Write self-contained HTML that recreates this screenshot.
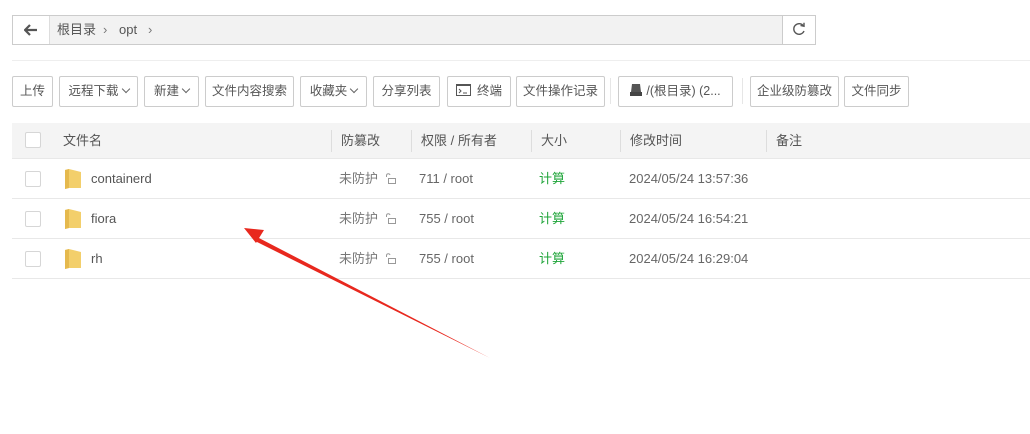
<!DOCTYPE html><html><head><meta charset="utf-8"><style>
*{box-sizing:border-box;margin:0;padding:0}
body{width:1030px;height:434px;background:#fff;font-family:"Liberation Sans","Noto Sans CJK SC",sans-serif;font-size:13px;color:#555;position:relative;overflow:hidden}
.a{position:absolute}
.path{left:12px;top:15px;width:804px;height:30px;border:1px solid #ccc;background:#f2f2f2}
.btn{position:absolute;top:76px;height:31px;border:1px solid #ccc;border-radius:2px;background:#fff;font-size:12.5px;color:#555;line-height:29px;text-align:center;white-space:nowrap}
.chev{display:inline-block;width:6px;height:6px;border-right:1px solid #666;border-bottom:1px solid #666;transform:rotate(45deg);margin-left:4px;position:relative;top:-3px}
.vs{position:absolute;top:78px;width:1px;height:26px;background:#e6e6e6}
.hd{left:12px;top:123px;width:1018px;height:36px;background:#f4f4f4;border-bottom:1px solid #e8e8e8}
.cd{position:absolute;top:130px;width:1px;height:22px;background:#ddd}
.cb{position:absolute;left:25px;width:16px;height:16px;border:1px solid #d6d6d6;background:#fff;border-radius:2px}
.t{position:absolute;white-space:nowrap;line-height:18px;height:18px}
.row{position:absolute;left:12px;width:1018px;height:1px;background:#e8e8e8}
.fold{position:absolute;left:65px;width:16px;height:20px}
.lk{position:absolute;left:384px}
</style></head><body>
<div class="a path"></div>
<div class="a" style="left:49px;top:16px;width:1px;height:28px;background:#ddd"></div>
<div class="a" style="left:13px;top:16px;width:36px;height:28px;background:#fff"></div>
<svg class="a" style="left:24px;top:24px" width="14" height="12"><path d="M1 6H13M6 1L1 6L6 11" stroke="#555" stroke-width="2.2" fill="none"/></svg>
<div class="t" style="left:57px;top:21px;color:#555">根目录</div>
<div class="t" style="left:103px;top:21px;color:#777">›</div>
<div class="t" style="left:119px;top:21px">opt</div>
<div class="t" style="left:148px;top:21px;color:#777">›</div>
<div class="a" style="left:782px;top:16px;width:33px;height:28px;background:#fff;border-left:1px solid #ccc"></div>
<svg class="a" style="left:792px;top:22px" width="14" height="14"><path d="M11.5 4A5.3 5.3 0 1 0 12 9" stroke="#555" stroke-width="1.4" fill="none"/><path d="M8.5 3.5L12 4.3L12 0.8" stroke="#555" stroke-width="1.4" fill="none"/></svg>
<div class="a" style="left:12px;top:60px;width:1018px;height:1px;background:#eee"></div>
<div class="btn" style="left:12px;width:41px">上传</div>
<div class="btn" style="left:59px;width:79px">远程下载<i class="chev"></i></div>
<div class="btn" style="left:144px;width:55px">新建<i class="chev"></i></div>
<div class="btn" style="left:205px;width:89px">文件内容搜索</div>
<div class="btn" style="left:300px;width:67px">收藏夹<i class="chev"></i></div>
<div class="btn" style="left:373px;width:67px">分享列表</div>
<div class="btn" style="left:447px;width:64px"><svg width="15" height="12" style="vertical-align:-1px;margin-right:6px"><rect x="0.5" y="0.5" width="14" height="11" fill="none" stroke="#555"/><rect x="0" y="0" width="15" height="2" fill="#555"/><path d="M3 5L5 7L3 9M7 9H11" stroke="#555" fill="none"/></svg>终端</div>
<div class="btn" style="left:516px;width:89px">文件操作记录</div>
<div class="vs" style="left:610px"></div>
<div class="btn" style="left:618px;width:115px"><svg width="12" height="12" style="vertical-align:-1px;margin-right:4px"><path d="M2 0H10L11 8H1Z" fill="#555"/><rect x="0" y="8" width="12" height="4" fill="#444"/></svg>/(根目录) (2...</div>
<div class="vs" style="left:742px"></div>
<div class="btn" style="left:750px;width:89px">企业级防篡改</div>
<div class="btn" style="left:844px;width:65px">文件同步</div>
<div class="a hd"></div>
<div class="cb" style="top:132px"></div>
<div class="t" style="left:63px;top:132px">文件名</div>
<div class="cd" style="left:331px"></div><div class="t" style="left:341px;top:132px">防篡改</div>
<div class="cd" style="left:411px"></div><div class="t" style="left:421px;top:132px">权限 / 所有者</div>
<div class="cd" style="left:531px"></div><div class="t" style="left:541px;top:132px">大小</div>
<div class="cd" style="left:620px"></div><div class="t" style="left:630px;top:132px">修改时间</div>
<div class="cd" style="left:766px"></div><div class="t" style="left:776px;top:132px">备注</div>

<div class="cb" style="top:171px"></div>
<svg class="fold" style="top:169px" viewBox="0 0 16 20"><path d="M0 1L4 0L16 3L16 19L4 19L0 20Z" fill="#f3cf6b"/><path d="M0 1L4 0L4 19L0 20Z" fill="#e5b94e"/></svg>
<div class="t" style="left:91px;top:170px">containerd</div>
<div class="t" style="left:339px;top:170px;color:#777">未防护</div>
<svg class="lk" style="top:173px" width="12" height="12"><path d="M2.5 4V2.5A1.8 1.8 0 0 1 6 2" stroke="#999" fill="none"/><rect x="4.5" y="5.5" width="7" height="5" stroke="#999" fill="none"/></svg>
<div class="t" style="left:419px;top:170px;color:#666">711 / root</div>
<div class="t" style="left:539px;top:170px;color:#20a53a">计算</div>
<div class="t" style="left:629px;top:170px;color:#666">2024/05/24 13:57:36</div>
<div class="row" style="top:198px"></div>

<div class="cb" style="top:211px"></div>
<svg class="fold" style="top:209px" viewBox="0 0 16 20"><path d="M0 1L4 0L16 3L16 19L4 19L0 20Z" fill="#f3cf6b"/><path d="M0 1L4 0L4 19L0 20Z" fill="#e5b94e"/></svg>
<div class="t" style="left:91px;top:210px">fiora</div>
<div class="t" style="left:339px;top:210px;color:#777">未防护</div>
<svg class="lk" style="top:213px" width="12" height="12"><path d="M2.5 4V2.5A1.8 1.8 0 0 1 6 2" stroke="#999" fill="none"/><rect x="4.5" y="5.5" width="7" height="5" stroke="#999" fill="none"/></svg>
<div class="t" style="left:419px;top:210px;color:#666">755 / root</div>
<div class="t" style="left:539px;top:210px;color:#20a53a">计算</div>
<div class="t" style="left:629px;top:210px;color:#666">2024/05/24 16:54:21</div>
<div class="row" style="top:238px"></div>

<div class="cb" style="top:251px"></div>
<svg class="fold" style="top:249px" viewBox="0 0 16 20"><path d="M0 1L4 0L16 3L16 19L4 19L0 20Z" fill="#f3cf6b"/><path d="M0 1L4 0L4 19L0 20Z" fill="#e5b94e"/></svg>
<div class="t" style="left:91px;top:250px">rh</div>
<div class="t" style="left:339px;top:250px;color:#777">未防护</div>
<svg class="lk" style="top:253px" width="12" height="12"><path d="M2.5 4V2.5A1.8 1.8 0 0 1 6 2" stroke="#999" fill="none"/><rect x="4.5" y="5.5" width="7" height="5" stroke="#999" fill="none"/></svg>
<div class="t" style="left:419px;top:250px;color:#666">755 / root</div>
<div class="t" style="left:539px;top:250px;color:#20a53a">计算</div>
<div class="t" style="left:629px;top:250px;color:#666">2024/05/24 16:29:04</div>
<div class="row" style="top:278px"></div>

<svg class="a" style="left:0;top:0" width="1030" height="434"><path d="M490 358L257 237L255 241Z" fill="#e8281e"/><path d="M244 228L264 230L256 243Z" fill="#e8281e"/></svg>
</body></html>
